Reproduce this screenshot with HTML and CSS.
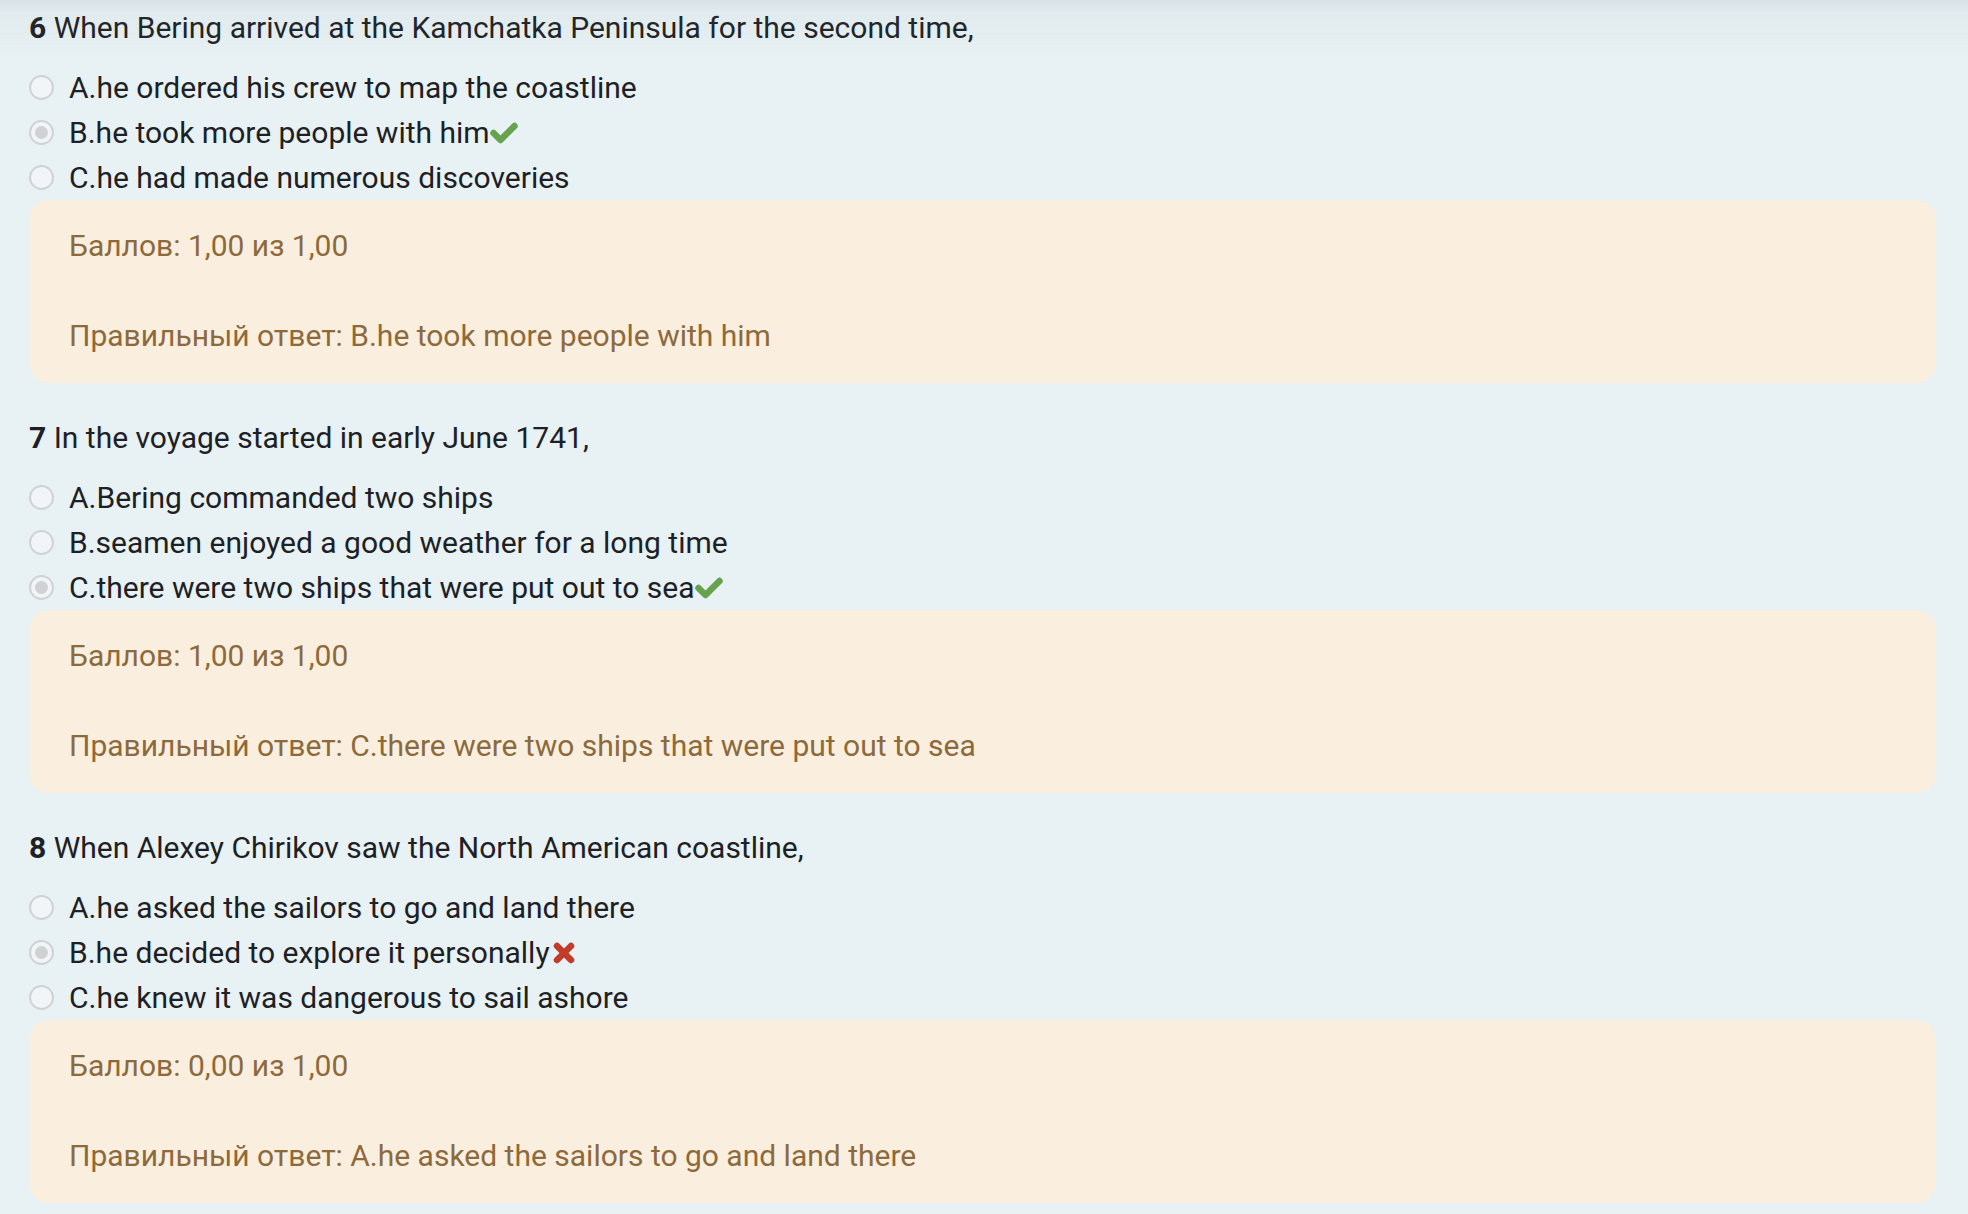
FILE: index.html
```html
<!DOCTYPE html>
<html lang="ru">
<head>
<meta charset="utf-8">
<title>Quiz review</title>
<link rel="stylesheet" href="styles.css">
</head>
<body>
<div class="topshade"></div>
<main class="page">
  <section class="que">
    <div class="qtext"><span class="qno">6</span> When Bering arrived at the Kamchatka Peninsula for the second time,</div>
    <div class="answers">
      <div class="opt"><span class="radio"></span><span class="label">A.he ordered his crew to map the coastline</span></div>
      <div class="opt"><span class="radio checked"></span><span class="label">B.he took more people with him</span><svg class="ico ok" width="28" height="22" viewBox="0 0 28 22"><polyline points="3.5,11 10.5,18 24.5,4" /></svg></div>
      <div class="opt"><span class="radio"></span><span class="label">C.he had made numerous discoveries</span></div>
    </div>
    <div class="outcome">
      <div>Баллов: 1,00 из 1,00</div>
      <div class="right">Правильный ответ: B.he took more people with him</div>
    </div>
  </section>
  <section class="que">
    <div class="qtext"><span class="qno">7</span> In the voyage started in early June 1741,</div>
    <div class="answers">
      <div class="opt"><span class="radio"></span><span class="label">A.Bering commanded two ships</span></div>
      <div class="opt"><span class="radio"></span><span class="label">B.seamen enjoyed a good weather for a long time</span></div>
      <div class="opt"><span class="radio checked"></span><span class="label">C.there were two ships that were put out to sea</span><svg class="ico ok" width="28" height="22" viewBox="0 0 28 22"><polyline points="3.5,11 10.5,18 24.5,4" /></svg></div>
    </div>
    <div class="outcome">
      <div>Баллов: 1,00 из 1,00</div>
      <div class="right">Правильный ответ: C.there were two ships that were put out to sea</div>
    </div>
  </section>
  <section class="que">
    <div class="qtext"><span class="qno">8</span> When Alexey Chirikov saw the North American coastline,</div>
    <div class="answers">
      <div class="opt"><span class="radio"></span><span class="label">A.he asked the sailors to go and land there</span></div>
      <div class="opt"><span class="radio checked"></span><span class="label">B.he decided to explore it personally</span><svg class="ico bad" width="22" height="22" viewBox="0 0 22 22"><path d="M4 4 L18 18 M18 4 L4 18" /></svg></div>
      <div class="opt"><span class="radio"></span><span class="label">C.he knew it was dangerous to sail ashore</span></div>
    </div>
    <div class="outcome">
      <div>Баллов: 0,00 из 1,00</div>
      <div class="right">Правильный ответ: A.he asked the sailors to go and land there</div>
    </div>
  </section>
</main>
</body>
</html>
```

FILE: styles.css
```css
html, body {
  margin: 0;
  padding: 0;
  background: #e8f1f4;
}
body {
  font-family: Roboto, "Noto Sans", sans-serif;
  font-size: 30px;
  line-height: 45px;
  color: #1d2125;
  position: relative;
  min-height: 1214px;
  overflow: hidden;
}
.topshade {
  position: absolute;
  left: 0;
  top: 0;
  right: 0;
  height: 60px;
  background: linear-gradient(to bottom, rgba(120,150,155,0.16) 0px, rgba(120,150,155,0.06) 12px, rgba(120,150,155,0.03) 40px, rgba(120,150,155,0) 60px);
  pointer-events: none;
}
.page {
  padding: 5px 32px 0 29px;
}
.que {
  margin-bottom: 32px;
}
.qtext {
  margin-bottom: 15px;
}
.qno {
  font-weight: 700;
}
.answers {
  display: flex;
  flex-direction: column;
}
.opt {
  display: flex;
  align-items: center;
  height: 45px;
}
.radio {
  box-sizing: border-box;
  width: 25px;
  height: 25px;
  border-radius: 50%;
  border: 2px solid #cfd3d5;
  background: #f1f5f7;
  margin-right: 15px;
  display: flex;
  align-items: center;
  justify-content: center;
  flex: none;
}
.radio.checked::after {
  content: "";
  width: 13px;
  height: 13px;
  border-radius: 50%;
  background: #cfd1d3;
}
.ico {
  flex: none;
  fill: none;
  stroke-linecap: round;
  stroke-linejoin: round;
}
.ok {
  margin-left: 0;
  stroke: #67a24e;
  stroke-width: 6.5;
}
.bad {
  margin-left: 3px;
  stroke: #c33b2a;
  stroke-width: 6.5;
}
.outcome {
  background: #faeedf;
  color: #8c6a3b;
  border-radius: 20px;
  padding: 23px 40px 25px;
}
.outcome .right {
  margin-top: 45px;
}
```
